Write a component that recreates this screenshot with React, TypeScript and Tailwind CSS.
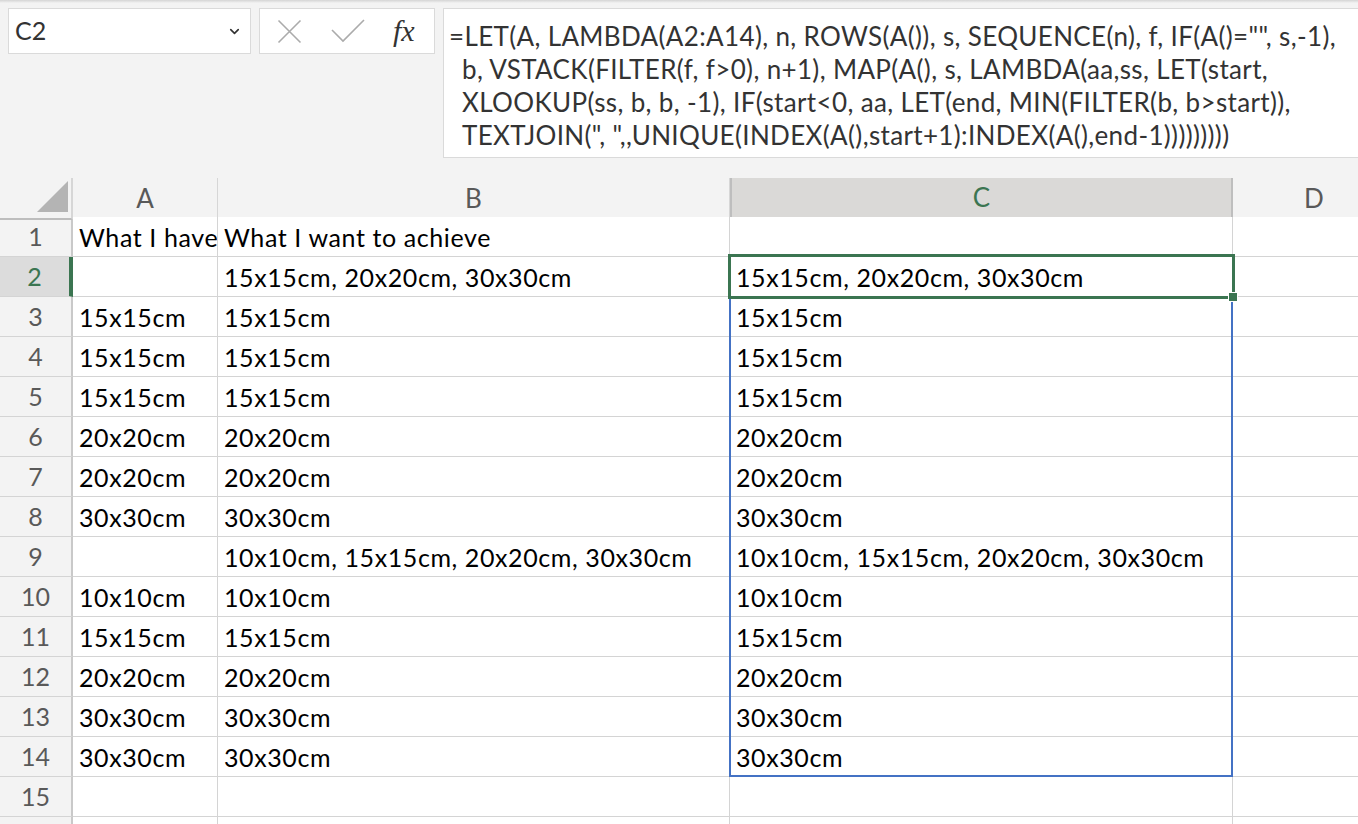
import { ChevronDown } from "lucide-react";

const GREEN = "#3b7551";

// cell data, rows 1..15 (cols A, B, C)
const rows: string[][] = [
  ["What I have", "What I want to achieve", ""],
  ["", "15x15cm, 20x20cm, 30x30cm", "15x15cm, 20x20cm, 30x30cm"],
  ["15x15cm", "15x15cm", "15x15cm"],
  ["15x15cm", "15x15cm", "15x15cm"],
  ["15x15cm", "15x15cm", "15x15cm"],
  ["20x20cm", "20x20cm", "20x20cm"],
  ["20x20cm", "20x20cm", "20x20cm"],
  ["30x30cm", "30x30cm", "30x30cm"],
  ["", "10x10cm, 15x15cm, 20x20cm, 30x30cm", "10x10cm, 15x15cm, 20x20cm, 30x30cm"],
  ["10x10cm", "10x10cm", "10x10cm"],
  ["15x15cm", "15x15cm", "15x15cm"],
  ["20x20cm", "20x20cm", "20x20cm"],
  ["30x30cm", "30x30cm", "30x30cm"],
  ["30x30cm", "30x30cm", "30x30cm"],
  ["", "", ""],
];

const formulaLines = [
  '=LET(A, LAMBDA(A2:A14), n, ROWS(A()), s, SEQUENCE(n), f, IF(A()="", s,-1),',
  "b, VSTACK(FILTER(f, f>0), n+1), MAP(A(), s, LAMBDA(aa,ss, LET(start,",
  "XLOOKUP(ss, b, b, -1), IF(start<0, aa, LET(end, MIN(FILTER(b, b>start)),",
  'TEXTJOIN(", ",,UNIQUE(INDEX(A(),start+1):INDEX(A(),end-1)))))))))',
];

const font = { fontFamily: "Lato, 'Open Sans', sans-serif" };
const cols = "grid grid-cols-[73px_145px_512px_503px_162px]";

function FormulaBar() {
  return (
    <div className="flex items-start gap-2 pl-2 pt-[8px] h-[178px]">
      {/* name box */}
      <div className="w-[243px] shrink-0 h-[46px] bg-white border border-[#dadada] flex items-center justify-between pl-[6px] pr-[8px]">
        <span className="text-[25px] text-[#333]">C2</span>
        <ChevronDown size={15} strokeWidth={2.6} className="text-[#333]" />
      </div>
      {/* cancel / enter / fx */}
      <div className="w-[176px] shrink-0 h-[46px] bg-white border border-[#dadada] flex items-center pl-[17px]">
        <svg width="25" height="25" viewBox="0 0 25 25" className="mr-[29px]">
          <path d="M1.5 1.5 L23.5 23.5 M23.5 1.5 L1.5 23.5" stroke="#ababab" strokeWidth="1.6" fill="none" />
        </svg>
        <svg width="34" height="24" viewBox="0 0 34 24" className="mr-[28px]">
          <path d="M1 11 L12 22 L33 1" stroke="#ababab" strokeWidth="1.6" fill="none" />
        </svg>
        <span
          className="italic text-[30px] text-[#333] leading-none"
          style={{ fontFamily: "'Liberation Serif', serif" }}
        >
          fx
        </span>
      </div>
      {/* formula text */}
      <div className="flex-1 h-[150px] bg-white border border-[#dadada] border-r-0 pl-[5px] pt-[11px]">
        {formulaLines.map((l, i) => (
          <div
            key={i}
            className={
              "h-[33px] leading-[33px] text-[26px] tracking-[0.35px] text-[#333] whitespace-pre " +
              (i > 0 ? "pl-[13px]" : "")
            }
          >
            {l}
          </div>
        ))}
      </div>
    </div>
  );
}

function HeaderRow() {
  return (
    <div className={cols + " h-[39px]"}>
      <div className="relative border-r-2 border-r-[#d6d6d6] border-b-2 border-b-[#bdbdbd]">
        <svg width="31" height="31" viewBox="0 0 31 31" className="absolute left-[37px] top-[3px]">
          <polygon points="31,0 31,31 0,31" fill="#b4b4b4" />
        </svg>
      </div>
      <div className="flex items-center justify-center border-r border-r-[#d6d6d6] border-b-2 border-b-[#bdbdbd] text-[26px] text-[#595959]">
        A
      </div>
      <div className="flex items-center justify-center border-r border-r-[#d6d6d6] border-b-2 border-b-[#bdbdbd] text-[26px] text-[#595959]">
        B
      </div>
      <div
        className="flex items-center justify-center bg-[#dad9d7] border-x-2 border-x-[#bebebe] border-b-[3px] text-[26px]"
        style={{ borderBottomColor: GREEN, color: GREEN }}
      >
        C
      </div>
      <div className="flex items-center justify-center border-b-2 border-b-[#bdbdbd] text-[26px] text-[#595959]">
        D
      </div>
    </div>
  );
}

export default function App() {
  return (
    <div className="w-[1358px] h-[824px] overflow-hidden bg-[#f3f3f3] relative" style={font}>
      <div className="absolute top-0 left-0 right-0 h-[3px] bg-gradient-to-b from-[#d4d4d4] to-[#f3f3f3]" />
      <FormulaBar />
      <div className="relative">
        <HeaderRow />
        {rows.map((r, i) => {
          const selected = i === 1;
          return (
            <div key={i} className={cols + " h-[40px]"}>
              <div
                className={
                  "flex items-center justify-center text-[25px] border-b border-b-[#d4d4d4] " +
                  (selected
                    ? "bg-[#dcdcdc] border-r-[4px] border-r-[#3b7551] text-[#3b7551]"
                    : "bg-[#f3f3f3] border-r-2 border-r-[#c9c9c9] text-[#595959]")
                }
              >
                {i + 1}
              </div>
              {r.map((c, j) => (
                <div
                  key={j}
                  className="bg-white border-b border-b-[#d4d4d4] border-r border-r-[#d4d4d4] px-[6px] overflow-hidden whitespace-nowrap text-[25px] tracking-[0.6px] text-black leading-[40px]"
                >
                  {c}
                </div>
              ))}
              <div className="bg-white border-b border-b-[#d4d4d4]" />
            </div>
          );
        })}
        {/* row 16, only its top edge shows */}
        <div className={cols + " h-[40px]"}>
          <div className="bg-[#f3f3f3] border-r-2 border-r-[#c9c9c9]" />
          <div className="bg-white border-r border-r-[#d4d4d4]" />
          <div className="bg-white border-r border-r-[#d4d4d4]" />
          <div className="bg-white border-r border-r-[#d4d4d4]" />
          <div className="bg-white" />
        </div>

        {/* C3:C14 range outline */}
        <div className="absolute left-[729px] top-[118px] w-[504px] h-[481px] border-2 border-[#4472c4] pointer-events-none" />
        {/* active cell C2 */}
        <div
          className="absolute left-[728px] top-[76px] w-[507px] h-[45px] border-[3px] pointer-events-none"
          style={{ borderColor: GREEN }}
        />
        {/* fill handle */}
        <div
          className="absolute left-[1228px] top-[114px] w-[10px] h-[10px] border border-white"
          style={{ backgroundColor: GREEN }}
        />
      </div>
    </div>
  );
}
